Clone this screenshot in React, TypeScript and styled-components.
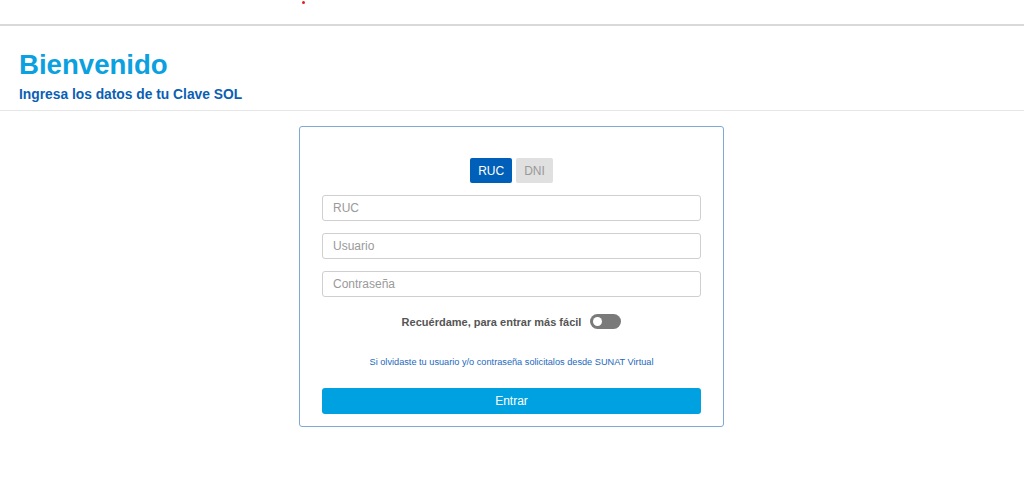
import React from "react";
import styled, { createGlobalStyle } from "styled-components";

const Global = createGlobalStyle`
  html, body { margin: 0; padding: 0; background: #fff; }
  body { font-family: "Liberation Sans", Arial, sans-serif; }
  * { box-sizing: border-box; }
`;

const TopBar = styled.div`
  height: 26px;
  border-bottom: 2px solid #d9d9d9;
  display: flex;
  align-items: flex-start;
  padding-left: 302px;
  padding-top: 1px;
`;

const Dot = styled.span`
  width: 3px;
  height: 3px;
  border-radius: 50%;
  background: #e41e1e;
`;

const Heading = styled.header`
  padding: 22px 19px 6px;
  border-bottom: 1px solid #e6e6e6;
`;

const Title = styled.h1`
  margin: 0;
  font-size: 27.6px;
  line-height: 34px;
  font-weight: 700;
  color: #0ba0df;
`;

const Subtitle = styled.h2`
  margin: 4px 0 0;
  font-size: 13.8px;
  line-height: 18px;
  font-weight: 700;
  color: #0b5fb3;
`;

const Main = styled.main`
  display: flex;
  justify-content: center;
  padding-top: 15px;
  padding-right: 1px;
`;

const Card = styled.form`
  width: 425px;
  border: 1px solid #7ea8d6;
  border-radius: 3px;
  padding: 31px 22px 12px;
  display: flex;
  flex-direction: column;
  align-items: stretch;
`;

const Tabs = styled.div`
  display: flex;
  justify-content: center;
  gap: 4px;
  margin-bottom: 12px;
`;

const Tab = styled.button<{ $active?: boolean }>`
  height: 25px;
  padding: 0 8px;
  border: none;
  border-radius: 2px;
  font-family: inherit;
  font-size: 12px;
  background: ${(p) => (p.$active ? "#005fb8" : "#e0e0e0")};
  color: ${(p) => (p.$active ? "#fff" : "#999")};
`;

const Field = styled.input`
  height: 26px;
  width: 100%;
  border: 1px solid #cfcfcf;
  border-radius: 3px;
  padding: 0 10px;
  font-family: inherit;
  font-size: 12px;
  margin-bottom: 12px;
  &::placeholder { color: #9a9a9a; }
`;

const RememberRow = styled.div`
  display: flex;
  justify-content: center;
  align-items: center;
  gap: 9px;
  margin-top: 5px;
`;

const RememberLabel = styled.span`
  font-size: 11px;
  font-weight: 700;
  color: #555;
`;

const Toggle = styled.span`
  width: 31px;
  height: 15px;
  border-radius: 8px;
  background: #7a7a7a;
  display: flex;
  align-items: center;
  padding-left: 3px;
`;

const Knob = styled.span`
  width: 9px;
  height: 9px;
  border-radius: 50%;
  background: #fff;
`;

const Help = styled.a`
  display: block;
  text-align: center;
  font-size: 9.2px;
  color: #2369bd;
  text-decoration: none;
  margin-top: 28px;
`;

const Submit = styled.button`
  margin-top: 21px;
  height: 26px;
  width: 100%;
  border: none;
  border-radius: 3px;
  background: #00a1e0;
  color: #fff;
  font-family: inherit;
  font-size: 12px;
`;

export default function App() {
  return (
    <>
      <Global />
      <TopBar>
        <Dot />
      </TopBar>
      <Heading>
        <Title>Bienvenido</Title>
        <Subtitle>Ingresa los datos de tu Clave SOL</Subtitle>
      </Heading>
      <Main>
        <Card onSubmit={(e) => e.preventDefault()}>
          <Tabs>
            <Tab type="button" $active>RUC</Tab>
            <Tab type="button">DNI</Tab>
          </Tabs>
          <Field placeholder="RUC" />
          <Field placeholder="Usuario" />
          <Field placeholder="Contraseña" type="password" />
          <RememberRow>
            <RememberLabel>Recuérdame, para entrar más fácil</RememberLabel>
            <Toggle>
              <Knob />
            </Toggle>
          </RememberRow>
          <Help href="#">Si olvidaste tu usuario y/o contraseña solicitalos desde SUNAT Virtual</Help>
          <Submit type="submit">Entrar</Submit>
        </Card>
      </Main>
    </>
  );
}
